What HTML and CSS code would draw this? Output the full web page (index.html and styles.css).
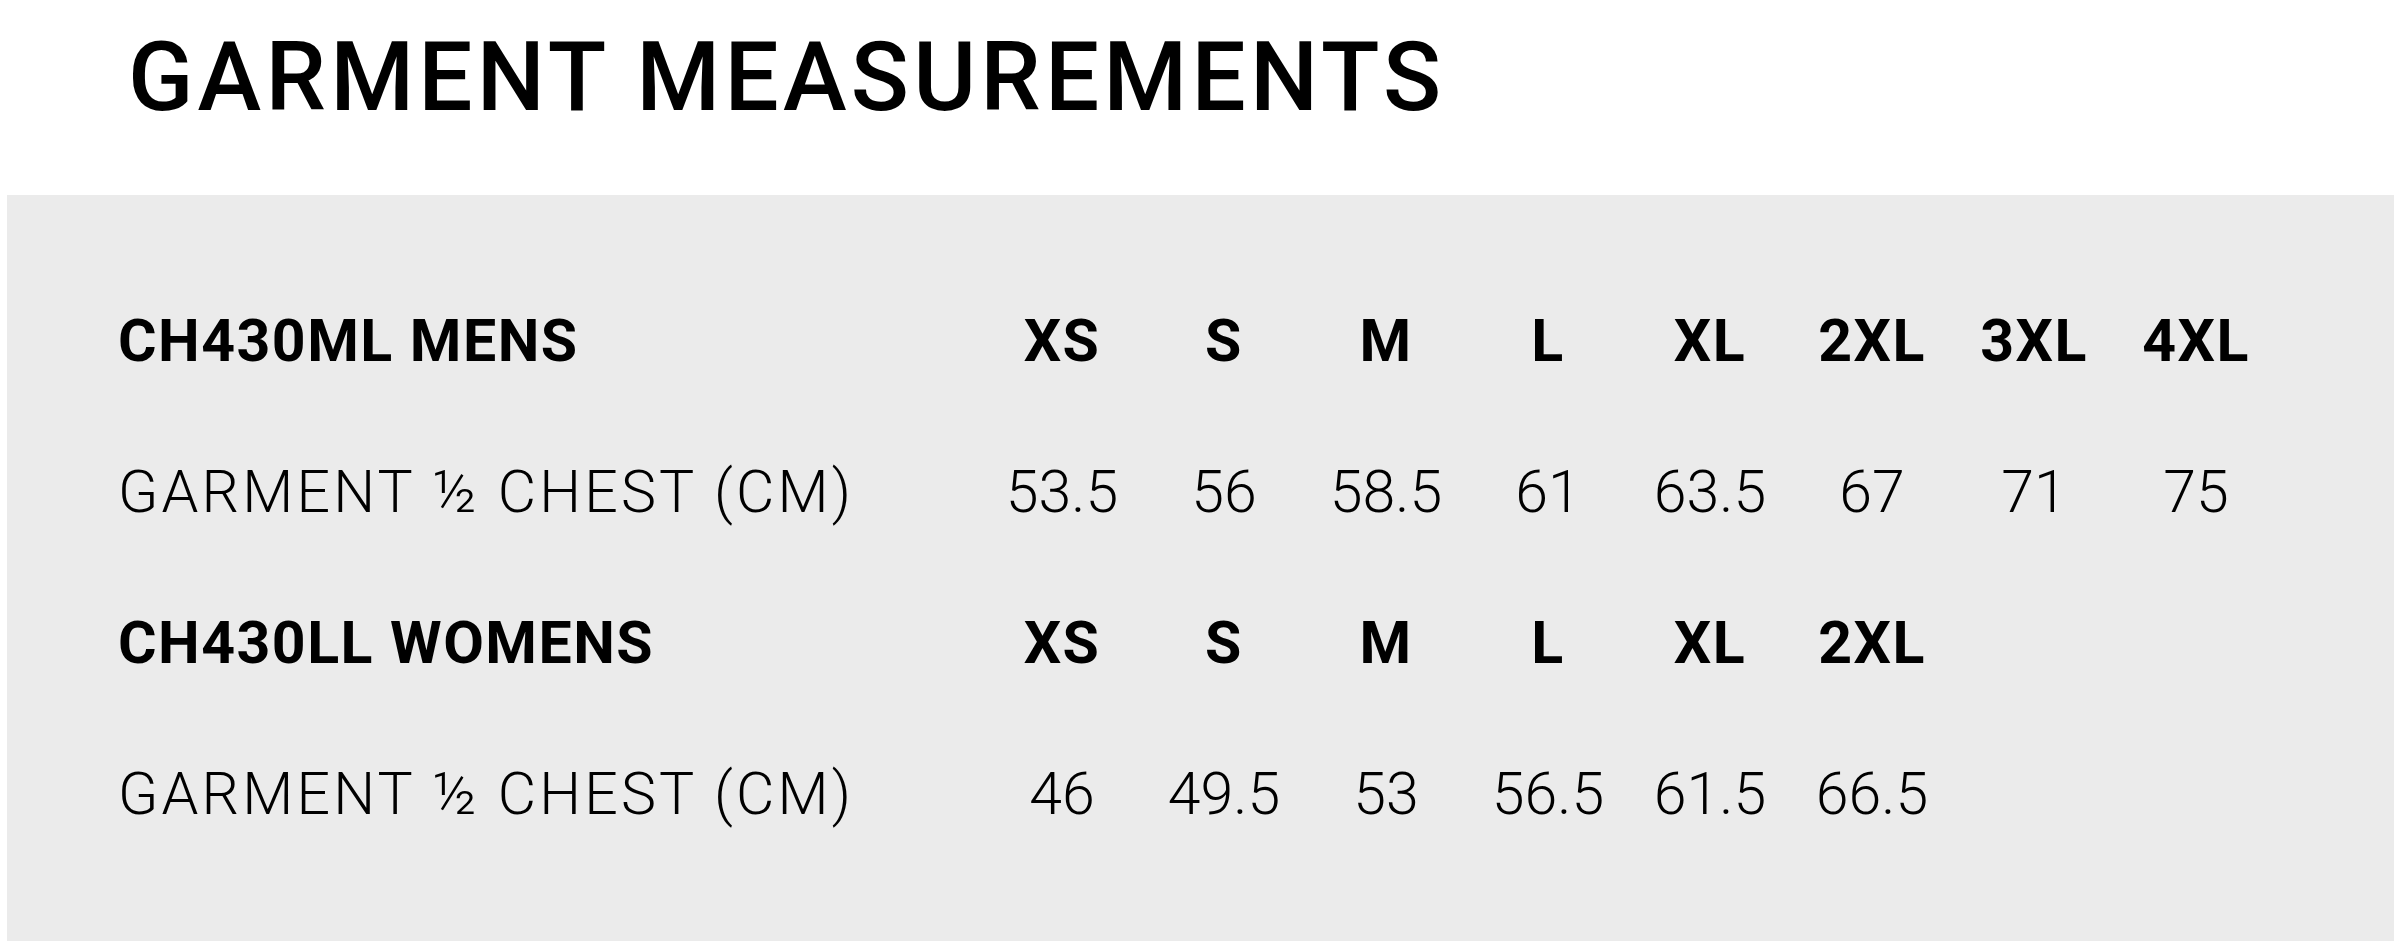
FILE: index.html
```html
<!DOCTYPE html>
<html lang="en">
<head>
<meta charset="utf-8">
<title>Garment Measurements</title>
<link rel="stylesheet" href="styles.css">
</head>
<body>
<header class="page-header">
  <h1 class="title">GARMENT MEASUREMENTS</h1>
</header>
<section class="panel">
  <div class="row head">
    <div class="label">CH430ML MENS</div>
    <div class="cell">XS</div><div class="cell">S</div><div class="cell">M</div><div class="cell">L</div>
    <div class="cell">XL</div><div class="cell">2XL</div><div class="cell">3XL</div><div class="cell">4XL</div>
  </div>
  <div class="row data">
    <div class="label">GARMENT ½ CHEST (CM)</div>
    <div class="cell">53.5</div><div class="cell">56</div><div class="cell">58.5</div><div class="cell">61</div>
    <div class="cell">63.5</div><div class="cell">67</div><div class="cell">71</div><div class="cell">75</div>
  </div>
  <div class="row head">
    <div class="label">CH430LL WOMENS</div>
    <div class="cell">XS</div><div class="cell">S</div><div class="cell">M</div><div class="cell">L</div>
    <div class="cell">XL</div><div class="cell">2XL</div>
  </div>
  <div class="row data">
    <div class="label">GARMENT ½ CHEST (CM)</div>
    <div class="cell">46</div><div class="cell">49.5</div><div class="cell">53</div><div class="cell">56.5</div>
    <div class="cell">61.5</div><div class="cell">66.5</div>
  </div>
</section>
</body>
</html>
```
FILE: styles.css
```css
html, body {
  margin: 0;
  padding: 0;
  background: #ffffff;
}
body {
  font-family: Roboto, "Liberation Sans", Arial, sans-serif;
  color: #000;
  height: 941px;
  overflow: hidden;
}
.page-header {
  height: 195px;
  display: flex;
  align-items: center;
  padding-left: 128px;
  box-sizing: border-box;
}
.title {
  margin: 0;
  font-size: 96px;
  font-weight: 500;
  letter-spacing: 0.044em;
  line-height: 1;
  position: relative;
  top: -21px;
}
.panel {
  margin-left: 7px;
  background: #ebebeb;
  padding: 70px 0 80px 111px;
  min-height: 746px;
  box-sizing: border-box;
}
.row {
  display: flex;
  align-items: center;
  height: 151px;
  font-size: 59px;
  line-height: 1;
}
.label {
  width: 863px;
  flex: none;
  white-space: nowrap;
}
.cell {
  width: 162px;
  flex: none;
  text-align: center;
  white-space: nowrap;
}
.head {
  font-weight: 700;
  letter-spacing: 0.025em;
}
.data {
  font-weight: 300;
}
.data .label {
  letter-spacing: 0.054em;
}
.data .cell {
  letter-spacing: 0;
}
```
